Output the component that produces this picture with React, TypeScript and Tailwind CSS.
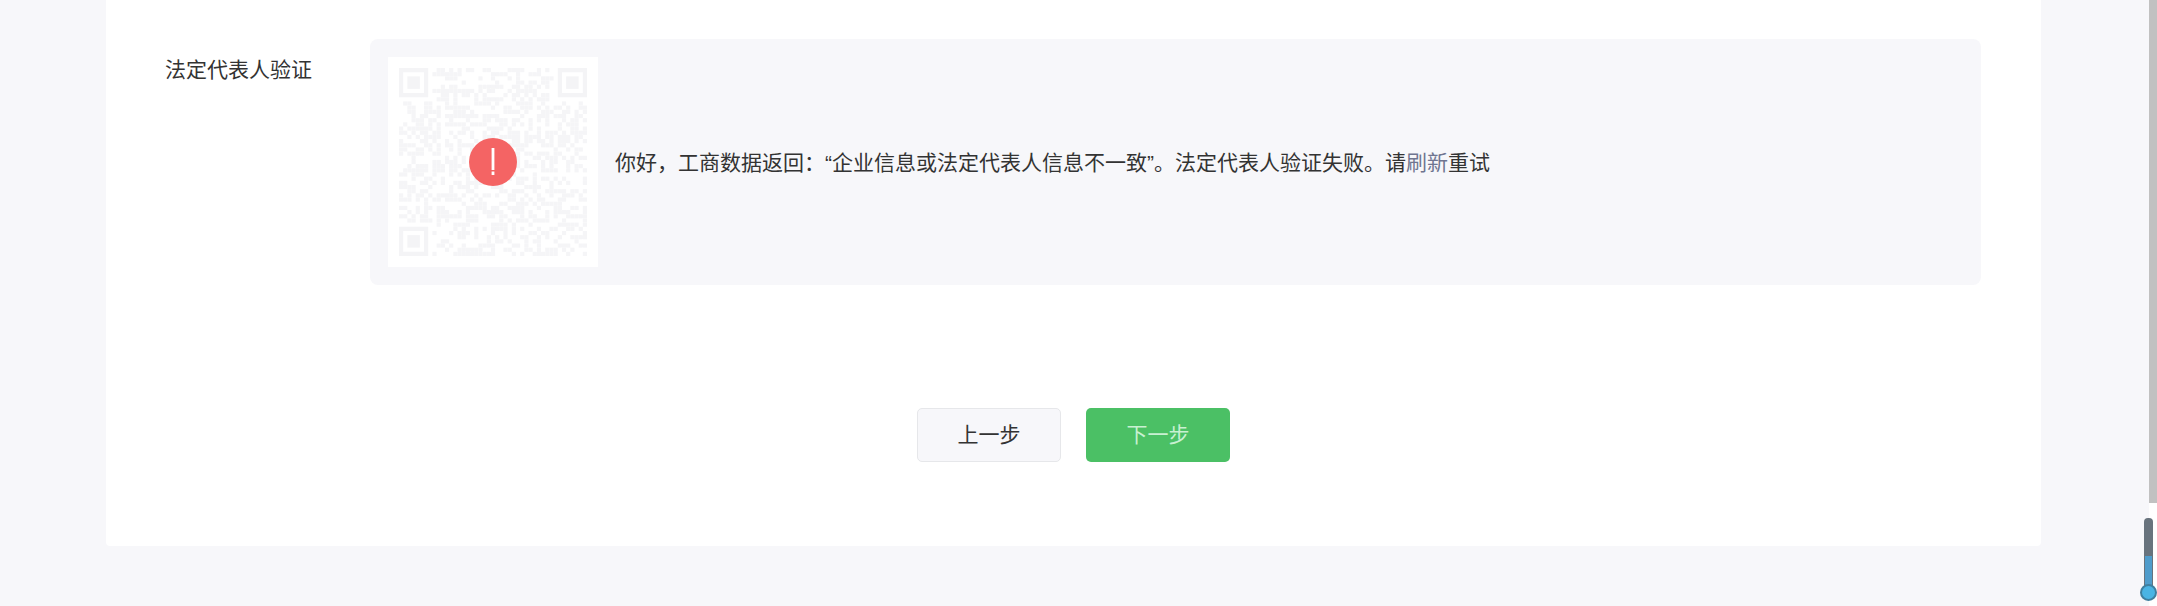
const N = 45;
function qrCells() {
  const cells: [number, number][] = [];
  let s = 12345;
  for (let y = 0; y < N; y++) {
    for (let x = 0; x < N; x++) {
      s = (s * 1103515245 + 12345) & 0x7fffffff;
      const inFinder = (x < 8 && y < 8) || (x >= N - 8 && y < 8) || (x < 8 && y >= N - 8);
      if (!inFinder && (s >> 16) % 100 < 50) cells.push([x, y]);
    }
  }
  return cells;
}
const cells = qrCells();

function Finder({ x, y }: { x: number; y: number }) {
  return (
    <g fill="#f4f4f6">
      <path fillRule="evenodd" d={`M${x} ${y}h7v7h-7zM${x + 1} ${y + 1}v5h5v-5z`} />
      <rect x={x + 2} y={y + 2} width={3} height={3} />
    </g>
  );
}

export default function App() {
  return (
    <div className="relative h-[606px] w-full overflow-hidden bg-[#f7f7fa] font-['Liberation_Sans','Noto_Sans_CJK_SC',sans-serif] text-[#333333]">
      <div className="ml-[106px] h-[546px] w-[1935px] rounded-b-[4px] bg-white">
        <div className="flex pl-[59px] pr-[60px] pt-[39px]">
          <div className="w-[205px] pt-[18px] text-[21px] leading-[26px]">法定代表人验证</div>
          <div className="flex h-[246px] w-[1611px] items-center rounded-[8px] bg-[#f7f7fa] pl-[18px]">
            <div className="relative h-[210px] w-[210px] bg-white">
              <svg viewBox={`0 0 ${N} ${N}`} className="absolute left-[11px] top-[11px] h-[188px] w-[188px] blur-[0.7px]">
                <g fill="#f5f5f7">
                  {cells.map(([x, y]) => (
                    <rect key={`${x}-${y}`} x={x} y={y} width={1} height={1} />
                  ))}
                </g>
                <Finder x={0} y={0} />
                <Finder x={N - 7} y={0} />
                <Finder x={0} y={N - 7} />
              </svg>
              <svg viewBox="0 0 48 48" className="absolute left-[81px] top-[81px] h-[48px] w-[48px]">
                <circle cx="24" cy="24" r="24" fill="#f46464" />
                <rect x="22.6" y="10" width="2.8" height="22" fill="#fff" />
                <rect x="22.6" y="33.5" width="2.8" height="3.5" fill="#fff" />
              </svg>
            </div>
            <p className="ml-[17px] pt-[2px] text-[21px] leading-[26px]">
              你好，工商数据返回：“企业信息或法定代表人信息不一致”。法定代表人验证失败。请<span className="text-[#6f7590]">刷新</span>重试
            </p>
          </div>
        </div>
        <div className="mt-[123px] flex justify-center gap-[25px]">
          <button className="h-[54px] w-[144px] rounded-[5px] border border-[#e6e7ea] bg-[#f7f7fa] text-[21px] text-[#333333]">上一步</button>
          <button className="h-[54px] w-[144px] rounded-[5px] bg-[#4bc065] text-[21px] text-[#c8f0d2]">下一步</button>
        </div>
      </div>
      <div className="absolute right-0 top-0 h-[503px] w-[8px] bg-[#c1c1c1]" />
      <div className="absolute right-0 top-[503px] h-[103px] w-[8px] bg-white" />
      <svg viewBox="0 0 17 84" className="absolute right-0 top-[518px] h-[84px] w-[17px]">
        <rect x="4" y="0" width="9" height="74" rx="4" fill="#68737d" />
        <rect x="5" y="38" width="7" height="36" fill="#4f9ccb" />
        <circle cx="8.5" cy="74.5" r="7.5" fill="#4ab4e4" stroke="#3f7f9f" strokeWidth="2" />
      </svg>
    </div>
  );
}
